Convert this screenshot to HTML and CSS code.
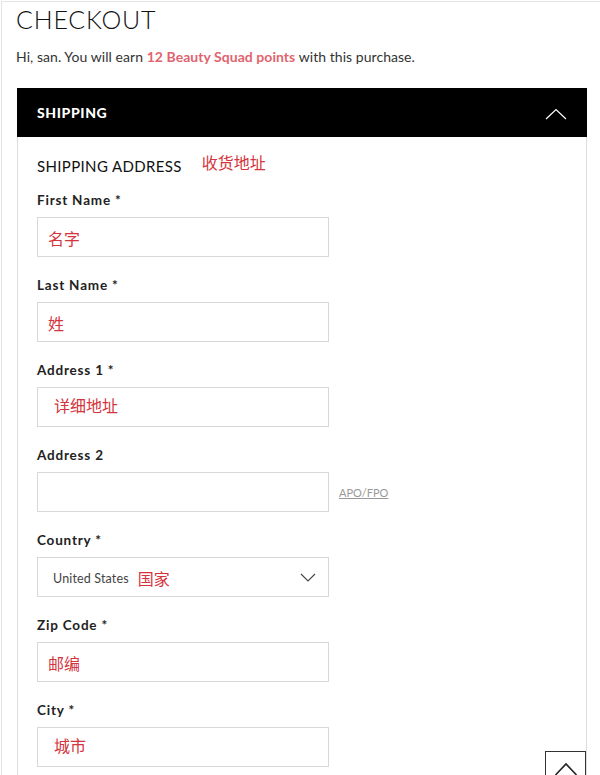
FILE: index.html
```html
<!DOCTYPE html>
<html lang="en">
<head>
<meta charset="utf-8">
<title>Checkout</title>
<link rel="stylesheet" href="styles.css">
</head>
<body>
<div class="page">
  <h1 class="title">CHECKOUT</h1>
  <p class="greeting">Hi, san. You will earn <strong class="points">12 Beauty Squad points</strong> with this purchase.</p>

  <section class="panel">
    <header class="panel-head">
      <span class="panel-title">SHIPPING</span>
      <svg class="chev-up" width="22" height="12" viewBox="0 0 22 12"><path d="M1 11 L11 1.5 L21 11" fill="none" stroke="#fff" stroke-width="1.2"/></svg>
    </header>
    <div class="panel-body">
      <h2 class="sub">SHIPPING ADDRESS <span class="cn note">收货地址</span></h2>

      <div class="field">
        <label class="label">First Name *</label>
        <div class="input"><span class="cn">名字</span></div>
      </div>
      <div class="field">
        <label class="label">Last Name *</label>
        <div class="input"><span class="cn">姓</span></div>
      </div>
      <div class="field">
        <label class="label">Address 1 *</label>
        <div class="input indent"><span class="cn">详细地址</span></div>
      </div>
      <div class="field">
        <label class="label">Address 2</label>
        <div class="row">
          <div class="input"></div>
          <a class="apo">APO/FPO</a>
        </div>
      </div>
      <div class="field">
        <label class="label">Country *</label>
        <div class="input select">
          <span class="sel-text">United States</span><span class="cn">国家</span>
          <svg class="chev-down" width="16" height="9" viewBox="0 0 16 9"><path d="M1 1 L8 8 L15 1" fill="none" stroke="#444" stroke-width="1.1"/></svg>
        </div>
      </div>
      <div class="field">
        <label class="label">Zip Code *</label>
        <div class="input"><span class="cn">邮编</span></div>
      </div>
      <div class="field">
        <label class="label">City *</label>
        <div class="input indent"><span class="cn">城市</span></div>
      </div>
    </div>
  </section>
</div>
<button class="to-top" aria-label="Back to top">
  <svg width="24" height="14" viewBox="0 0 24 14"><path d="M1.5 13 L12 2 L22.5 13" fill="none" stroke="#222" stroke-width="1.6"/></svg>
</button>
</body>
</html>
```

FILE: styles.css
```css
html, body {
  margin: 0;
  padding: 0;
  background: #fff;
}
body {
  font-family: "Lato", "Noto Sans", sans-serif;
  color: #333;
  height: 775px;
  overflow: hidden;
}
.page {
  margin: 1px 0 0 1px;
  border-top: 1px solid #e4e4e4;
  border-left: 1px solid #e4e4e4;
  padding: 0 13px 0 14px;
  min-height: 800px;
}
.title {
  margin: 0;
  padding-top: 2px;
  font-family: "Lato", sans-serif;
  font-weight: 300;
  font-size: 25px;
  line-height: 30px;
  letter-spacing: 0.8px;
  color: #111;
}
.greeting {
  margin: 14px 0 0 0;
  font-size: 14px;
  line-height: 18px;
  letter-spacing: 0.05px;
  color: #333;
}
.points {
  color: #e0646f;
  font-weight: 700;
}
.panel {
  margin: 22px 0 0 1px;
}
.panel-head {
  background: #000;
  height: 49px;
  display: flex;
  align-items: center;
  justify-content: space-between;
  padding: 0 20px 0 20px;
}
.panel-title {
  color: #fff;
  font-weight: 900;
  font-size: 14px;
  letter-spacing: 0.6px;
}
.chev-up {
  margin-top: 2px;
}
.panel-body {
  border-left: 1px solid #ddd;
  border-right: 1px solid #ddd;
  padding: 18px 19px 40px 19px;
}
.sub {
  margin: 0 0 16px 0;
  font-family: "Lato", sans-serif;
  font-weight: 400;
  font-size: 15px;
  line-height: 20px;
  letter-spacing: 0.35px;
  color: #111;
}
.cn {
  font-family: "Noto Sans CJK SC", sans-serif;
  color: #d3343d;
  font-size: 16px;
  letter-spacing: 0;
}
.note {
  margin-left: 16px;
  position: relative;
  top: -3px;
}
.field {
  margin-bottom: 20px;
}
.label {
  display: block;
  font-weight: 700;
  font-size: 13.5px;
  line-height: 17px;
  letter-spacing: 0.8px;
  color: #222;
  margin-bottom: 8px;
}
.input {
  box-sizing: border-box;
  width: 292px;
  height: 40px;
  border: 1px solid #d8d8d8;
  display: flex;
  align-items: center;
  padding: 2px 10px 0 10px;
}
.input.indent {
  padding-left: 16px;
  padding-top: 0;
  padding-bottom: 4px;
}
.row {
  display: flex;
  align-items: center;
}
.apo {
  margin-left: 10px;
  font-size: 11px;
  color: #999;
  text-decoration: underline;
  letter-spacing: 0;
}
.select {
  padding-left: 15px;
  padding-right: 12px;
}
.sel-text {
  font-size: 12.5px;
  color: #444;
  margin-right: 9px;
  letter-spacing: 0.15px;
}
.chev-down {
  margin-left: auto;
  margin-top: -1px;
}
.to-top {
  position: fixed;
  left: 545px;
  top: 751px;
  width: 41px;
  height: 40px;
  background: #fff;
  border: 1px solid #333;
  padding: 10px 0 0 0;
  margin: 0;
  display: flex;
  justify-content: center;
  align-items: flex-start;
}
```
